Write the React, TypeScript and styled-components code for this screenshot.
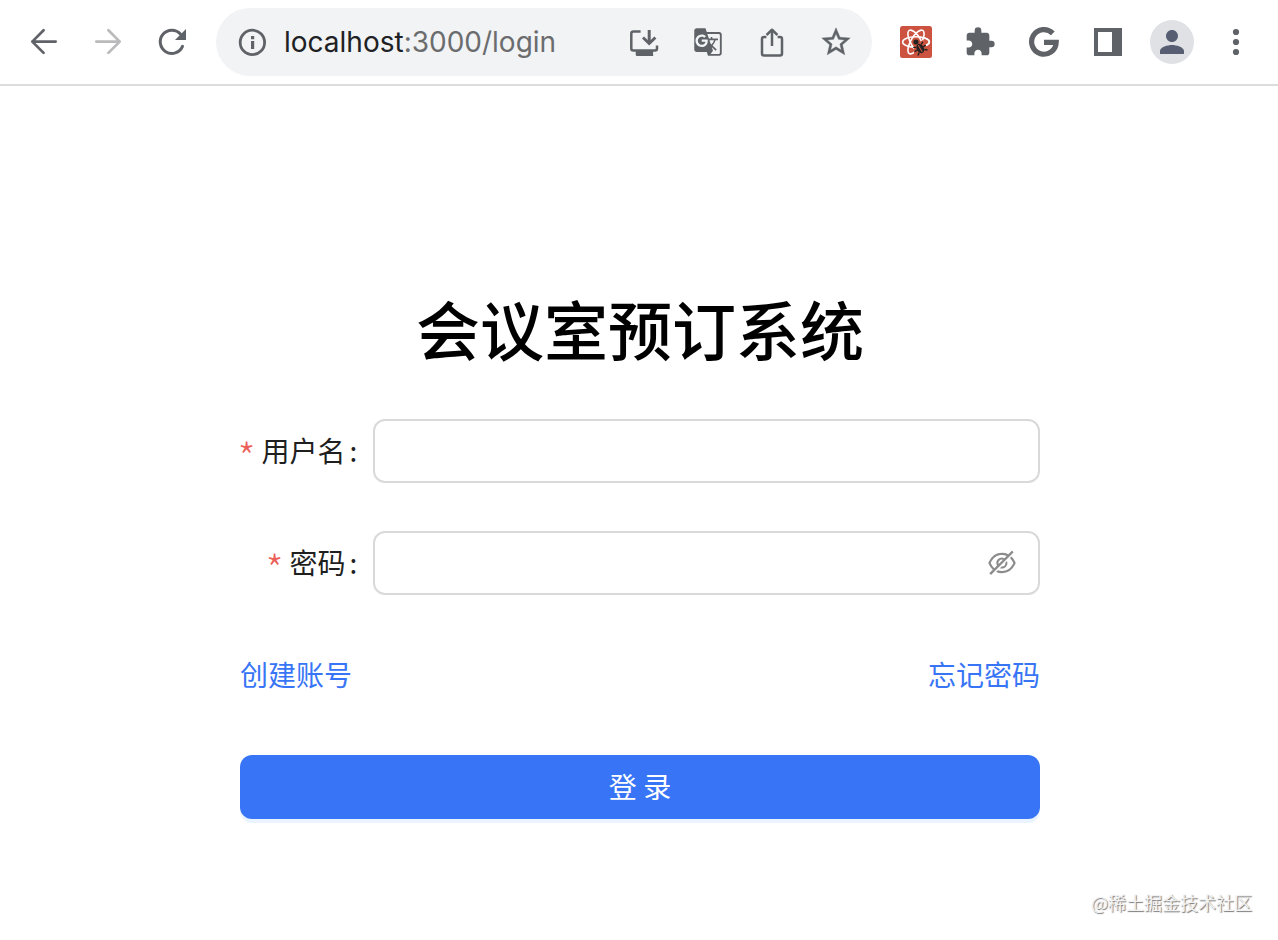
import React from "react";
import styled, { createGlobalStyle } from "styled-components";
import { MdExtension, MdGTranslate, MdPerson } from "react-icons/md";
import { AiOutlineEyeInvisible } from "react-icons/ai";

const GlobalStyle = createGlobalStyle`
  *, *::before, *::after { box-sizing: border-box; }
  body {
    margin: 0;
    background: #fff;
    color: #1f1f1f;
    font-family: "Noto Sans CJK SC", sans-serif;
    font-size: 28px;
  }
`;

const Window = styled.div`
  position: relative;
  display: flex;
  flex-direction: column;
  min-height: 100vh;
`;

const Toolbar = styled.header`
  display: flex;
  align-items: center;
  gap: 12px;
  height: 86px;
  padding: 0 10px 0 12px;
  border-bottom: 2px solid #dcdcde;
`;

const ButtonGroup = styled.div`
  display: flex;
  flex: none;
`;

const IconButton = styled.button<{ $tone?: string }>`
  display: flex;
  align-items: center;
  justify-content: center;
  width: 64px;
  height: 64px;
  padding: 0;
  border: 0;
  background: none;
  color: ${(p) => p.$tone ?? "#5f6368"};
  cursor: pointer;
`;

const AddressBar = styled.div`
  display: flex;
  flex: 1;
  align-items: center;
  min-width: 0;
  height: 68px;
  padding: 0 4px 0 20px;
  border-radius: 34px;
  background: #f1f3f4;
`;

const SiteInfo = styled(IconButton)`
  width: 32px;
  height: 32px;
  margin-right: 16px;
`;

const Address = styled.div`
  flex: 1;
  min-width: 0;
  overflow: hidden;
  white-space: nowrap;
  color: #6b6c6e;
  font-family: Inter, "Liberation Sans", sans-serif;
  font-size: 28px;
  line-height: 40px;
`;

const Host = styled.span`
  color: #202124;
`;

const Avatar = styled.span`
  display: flex;
  align-items: center;
  justify-content: center;
  width: 44px;
  height: 44px;
  border-radius: 50%;
  background: #dfe1e5;
  color: #575e71;
`;

const Page = styled.main`
  flex: 1;
  padding: 200px 24px 40px 26px;
`;

const LoginPanel = styled.section`
  width: 100%;
  max-width: 800px;
  margin: 0 auto;
`;

const Title = styled.h1`
  margin: 0 0 51px;
  color: #000;
  font-size: 64px;
  font-weight: 500;
  line-height: 82px;
  text-align: center;
`;

const Form = styled.form`
  display: flex;
  flex-direction: column;
  gap: 48px;
`;

const Field = styled.div`
  display: grid;
  grid-template-columns: minmax(0, 1fr) minmax(0, 5fr);
  align-items: center;
`;

const Label = styled.label`
  display: flex;
  justify-content: flex-end;
  padding: 0 16px 2px 0;
  line-height: 62px;
  white-space: nowrap;
`;

const Required = styled.span`
  height: 62px;
  margin-right: 6px;
  color: #ec5f59;
  font-size: 40px;
  font-weight: 300;
  line-height: 74px;
`;

const Colon = styled.span`
  margin-left: 4px;
`;

const InputBox = styled.div`
  display: flex;
  align-items: center;
  height: 64px;
  padding: 0 20px;
  border: 2px solid #d9d9d9;
  border-radius: 12px;
  background: #fff;
`;

const TextInput = styled.input`
  flex: 1;
  min-width: 0;
  padding: 0;
  border: 0;
  outline: 0;
  background: none;
  color: inherit;
  font: inherit;
`;

const RevealButton = styled(IconButton)`
  width: 32px;
  height: 32px;
`;

const Links = styled.nav`
  display: flex;
  justify-content: space-between;
  padding-bottom: 2px;
  line-height: 62px;
`;

const TextLink = styled.a`
  color: #3875f6;
  text-decoration: none;
`;

const SubmitButton = styled.button`
  height: 64px;
  padding: 0 0 2px;
  border: 0;
  border-radius: 12px;
  background: #3875f6;
  box-shadow: 0 4px 0 #ebf4fe;
  color: #fff;
  font: inherit;
  cursor: pointer;
`;

const Watermark = styled.span`
  position: absolute;
  right: 26px;
  bottom: 24px;
  color: #f2f2f2;
  font-size: 18px;
  line-height: 28px;
  text-shadow: 1px 1px 1px #777;
`;

const line = {
  fill: "none",
  stroke: "currentColor",
  strokeWidth: 2.7,
  strokeLinecap: "round" as const,
  strokeLinejoin: "round" as const,
};

const BackIcon = () => (
  <svg width="32" height="32" viewBox="0 0 32 32" {...line}>
    <path d="M27.7 15.6H4.3M15.6 4.3 4.3 15.6l11.3 11.3" />
  </svg>
);

const ForwardIcon = () => (
  <svg width="32" height="32" viewBox="0 0 32 32" {...line}>
    <path d="M4.3 15.6h23.4M16.4 4.3l11.3 11.3-11.3 11.3" />
  </svg>
);

const ReloadIcon = () => (
  <svg width="32" height="32" viewBox="0 0 32 32" {...line}>
    <path d="M26.5 20.4A11.6 11.6 0 1 1 24.6 8.2" strokeWidth="3" />
    <path d="M30 3V14H19Z" fill="currentColor" stroke="none" />
  </svg>
);

const InfoIcon = () => (
  <svg width="32" height="32" viewBox="0 0 32 32" fill="currentColor">
    <circle cx="16.4" cy="16.4" r="12.2" fill="none" stroke="currentColor" strokeWidth="2.8" />
    <path d="M15 10h3.2v3.2H15zM15 15h3.2v8H15z" />
  </svg>
);

const InstallIcon = () => (
  <svg width="32" height="32" viewBox="0 0 32 32" {...line}>
    <path d="M12.6 5.4H5.3a2 2 0 0 0-2 2v15a2 2 0 0 0 2 2H27a2 2 0 0 0 2-2V19.4" strokeWidth="2.5" strokeLinecap="butt" />
    <path d="M7.7 25h17.4v5H9.2a1.5 1.5 0 0 1-1.5-1.5z" fill="currentColor" stroke="none" />
    <path d="M21.2 4v13.4M15 11.5l6.2 6 6.2-6" strokeWidth="3" strokeLinecap="butt" strokeLinejoin="miter" />
  </svg>
);

const ShareIcon = () => (
  <svg width="32" height="32" viewBox="0 0 32 32" {...line}>
    <path d="M10.4 11H8a2 2 0 0 0-2 2v14.4a2 2 0 0 0 2 2h16a2 2 0 0 0 2-2V13a2 2 0 0 0-2-2h-2.4" strokeWidth="2.5" strokeLinecap="butt" />
    <path d="M16 20V4.6M10.6 9 16 3.7 21.4 9" strokeWidth="2.5" strokeLinecap="butt" />
  </svg>
);

const StarIcon = () => (
  <svg width="34" height="34" viewBox="0 0 24 24" fill="currentColor" stroke="currentColor" strokeWidth="0.3">
    <path d="M22 9.24l-7.19-.62L12 2 9.19 8.63 2 9.24l5.46 4.73L5.82 21 12 17.27 18.18 21l-1.63-7.03L22 9.24zM12 15.4l-3.76 2.27 1-4.28-3.32-2.88 4.38-.38L12 6.1l1.71 4.04 4.38.38-3.32 2.88 1 4.28L12 15.4z" />
  </svg>
);

const ReactBugIcon = () => (
  <svg width="32" height="32" viewBox="0 0 32 32">
    <rect width="32" height="32" rx="2.5" fill="#cb5340" />
    <g fill="none" stroke="#fff" strokeWidth="1.6">
      <ellipse cx="16" cy="16" rx="13.4" ry="5.2" />
      <ellipse cx="16" cy="16" rx="13.4" ry="5.2" transform="rotate(60 16 16)" />
      <ellipse cx="16" cy="16" rx="13.4" ry="5.2" transform="rotate(120 16 16)" />
    </g>
    <path d="m14 19 9-5 5 9-4 7-10-1z" fill="#cb5340" />
    <path d="M20 11.2c6 .6 9.5 2.5 9.4 4.8-.1 1.3-1.5 2.5-3.8 3.4" fill="none" stroke="#fff" strokeWidth="1.6" />
    <circle cx="16" cy="16" r="2.6" fill="#222" />
    <g transform="rotate(-30 20 22)">
      <ellipse cx="20" cy="22.6" rx="3.6" ry="5" fill="#222" />
      <path d="M17 19.5 14.4 18M16.5 22.5h-3M17 25.5l-2.5 2M23 19.5l2.6-1.5M23.5 22.5h3M23 25.5l2.5 2" stroke="#222" strokeWidth="1.4" />
      <path d="M20 18.5v8" stroke="#cb5340" strokeWidth="1" />
    </g>
  </svg>
);

const GoogleIcon = () => (
  <svg width="32" height="32" viewBox="0 0 32 32" fill="none" stroke="currentColor" strokeWidth="5.2">
    <path d="M24.8 7.4A12.3 12.3 0 1 0 28.2 16.3H16" />
  </svg>
);

const SidePanelIcon = () => (
  <svg width="28" height="28" viewBox="0 0 28 28">
    <path d="M0 0h28v28H0zM4 4v20h14V4z" fill="currentColor" fillRule="evenodd" />
  </svg>
);

const MenuIcon = () => (
  <svg width="32" height="32" viewBox="0 0 32 32" fill="currentColor">
    <circle cx="16" cy="6" r="3.1" />
    <circle cx="16" cy="16" r="3.1" />
    <circle cx="16" cy="26" r="3.1" />
  </svg>
);

interface FormFieldProps {
  id: string;
  label: string;
  type?: string;
  children?: React.ReactNode;
}

const FormField = ({ id, label, type = "text", children }: FormFieldProps) => (
  <Field>
    <Label htmlFor={id}>
      <Required>*</Required>
      {label}
      <Colon>:</Colon>
    </Label>
    <InputBox>
      <TextInput id={id} type={type} required />
      {children}
    </InputBox>
  </Field>
);

export default function App() {
  return (
    <Window>
      <GlobalStyle />
      <Toolbar>
        <ButtonGroup>
          <IconButton aria-label="后退"><BackIcon /></IconButton>
          <IconButton aria-label="前进" $tone="#bababc"><ForwardIcon /></IconButton>
          <IconButton aria-label="重新加载"><ReloadIcon /></IconButton>
        </ButtonGroup>
        <AddressBar>
          <SiteInfo aria-label="网站信息"><InfoIcon /></SiteInfo>
          <Address><Host>localhost</Host>:3000/login</Address>
          <ButtonGroup>
            <IconButton aria-label="安装"><InstallIcon /></IconButton>
            <IconButton aria-label="翻译"><MdGTranslate size={30} /></IconButton>
            <IconButton aria-label="分享"><ShareIcon /></IconButton>
            <IconButton aria-label="收藏"><StarIcon /></IconButton>
          </ButtonGroup>
        </AddressBar>
        <ButtonGroup>
          <IconButton aria-label="React 开发者工具"><ReactBugIcon /></IconButton>
          <IconButton aria-label="扩展程序"><MdExtension size={32} /></IconButton>
          <IconButton aria-label="Google"><GoogleIcon /></IconButton>
          <IconButton aria-label="侧边栏"><SidePanelIcon /></IconButton>
          <IconButton aria-label="个人资料"><Avatar><MdPerson size={36} /></Avatar></IconButton>
          <IconButton aria-label="菜单"><MenuIcon /></IconButton>
        </ButtonGroup>
      </Toolbar>
      <Page>
        <LoginPanel>
          <Title>会议室预订系统</Title>
          <Form onSubmit={(e) => e.preventDefault()}>
            <FormField id="username" label="用户名" />
            <FormField id="password" label="密码" type="password">
              <RevealButton type="button" aria-label="显示密码" $tone="#8c8c8c">
                <AiOutlineEyeInvisible size={32} />
              </RevealButton>
            </FormField>
            <Links>
              <TextLink href="#register">创建账号</TextLink>
              <TextLink href="#reset">忘记密码</TextLink>
            </Links>
            <SubmitButton type="submit">登 录</SubmitButton>
          </Form>
        </LoginPanel>
      </Page>
      <Watermark>@稀土掘金技术社区</Watermark>
    </Window>
  );
}
